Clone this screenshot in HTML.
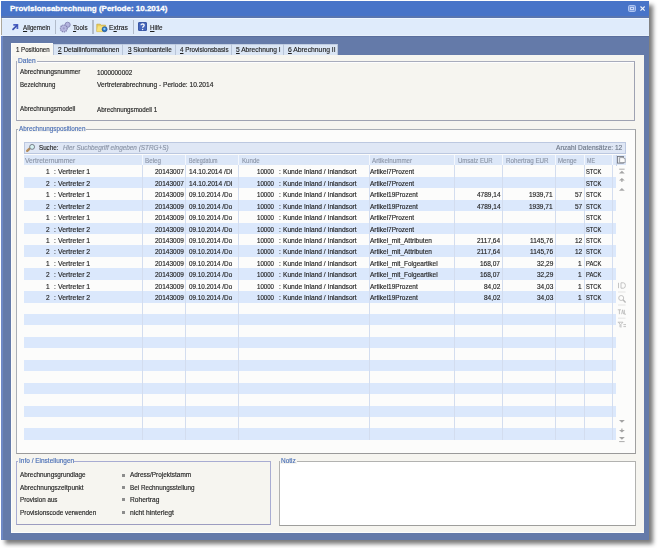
<!DOCTYPE html>
<html><head><meta charset="utf-8">
<style>
html,body{margin:0;padding:0;}
body{width:658px;height:548px;overflow:hidden;background:#ffffff;position:relative;font-family:"Liberation Sans",sans-serif;}
.a{position:absolute;box-sizing:border-box;}
.t{position:absolute;white-space:nowrap;line-height:1;transform-origin:0 0;font-family:"Liberation Sans",sans-serif;-webkit-text-stroke:0.15px currentColor;}
.t u{text-decoration:underline;text-decoration-thickness:0.75px;text-underline-offset:0.6px;}
svg{position:absolute;overflow:visible;}
</style></head><body>
<!-- shadow -->
<div class="a" style="left:4.6px;top:5px;width:648.6px;height:538.6px;background:rgba(40,40,40,0.62);filter:blur(2px);"></div>
<!-- window frame -->
<div class="a" style="left:1.2px;top:1.4px;width:648px;height:539px;background:#647aa9;"></div>
<div class="a" style="left:1.2px;top:36px;width:1.6px;height:504px;background:#6e88c4;"></div>
<!-- title -->
<div class="a" style="left:1.2px;top:1.4px;width:648px;height:14.3px;background:#4874c8;"></div>
<div class="a" style="left:1.2px;top:15.7px;width:648px;height:1.9px;background:#5a76b0;"></div>
<!-- toolbar -->
<div class="a" style="left:1.2px;top:17.5px;width:648px;height:18.5px;background:#dfebfb;border-top:1px solid #eef6fe;border-bottom:1px solid #e8f1fc;"></div>
<div class="a" style="left:1.2px;top:18px;width:1.2px;height:17px;background:#8a7a5a;opacity:0.6"></div>
<div class="a" style="left:54.6px;top:20px;width:1.2px;height:13.6px;background:#b2bccb;"></div>
<div class="a" style="left:92.4px;top:20px;width:1.2px;height:13.6px;background:#b2bccb;"></div>
<div class="a" style="left:132.6px;top:20px;width:1.2px;height:13.6px;background:#b2bccb;"></div>
<!-- window buttons -->
<div class="a" style="left:628.1px;top:4.9px;width:7.8px;height:7.5px;border:1.2px solid #aec4f0;border-radius:1.6px;background:#7f9fe0;"></div>
<div class="a" style="left:629.9px;top:7.1px;width:4.2px;height:3.4px;border:1px solid #c6d6f6;background:#6a88cc;"></div>
<svg style="left:640px;top:5.8px" width="5.2" height="5.2" viewBox="0 0 5.2 5.2"><path d="M0.5 0.5L4.7 4.7M4.7 0.5L0.5 4.7" stroke="#eef3fc" stroke-width="1.15"/></svg>
<div class="a" style="left:2.8px;top:36px;width:646.4px;height:1.2px;background:#5a6e9c;"></div>
<!-- tabs -->
<div class="a" style="left:53.4px;top:43.8px;width:284.6px;height:11.2px;background:#dae5f4;border-top:1px solid #c0cde2;"></div>
<div class="a" style="left:122.2px;top:44px;width:1px;height:11px;background:#b9c5d8;"></div>
<div class="a" style="left:174.9px;top:44px;width:1px;height:11px;background:#b9c5d8;"></div>
<div class="a" style="left:230.9px;top:44px;width:1px;height:11px;background:#b9c5d8;"></div>
<div class="a" style="left:282.7px;top:44px;width:1px;height:11px;background:#b9c5d8;"></div>
<div class="a" style="left:337.4px;top:44px;width:1px;height:11px;background:#b9c5d8;"></div>
<!-- content -->
<div class="a" style="left:10.9px;top:54.8px;width:633.3px;height:478.5px;background:#f6f5f0;border-left:1px solid #fdfdfb;border-bottom:1px solid #fdfdfb;"></div>
<div class="a" style="left:10.9px;top:42.8px;width:42.5px;height:13px;background:#f8f7f2;border-top:1px solid #fcfcfa;border-left:1px solid #fdfdfb;"></div>
<div class="a" style="left:53.2px;top:43.5px;width:0.9px;height:11.5px;background:#b4c0d4;"></div>
<!-- Daten group -->
<div class="a" style="left:16px;top:60.8px;width:619px;height:60.6px;border:1px solid #a8acbc;border-right-color:#9ea2b2;border-bottom-color:#9ea2b2;box-shadow:inset 1px 1px 0 #fdfdff;"></div>
<div class="a" style="left:17.3px;top:58px;width:19.8px;height:6px;background:#f6f5f0;"></div>
<!-- Positions group -->
<div class="a" style="left:15.8px;top:129.2px;width:620px;height:324.4px;border:1px solid #a9aeb6;border-bottom-color:#9a9a9a;border-right-color:#a0a0a0;background:#fcfcfb;"></div>
<div class="a" style="left:17.6px;top:126px;width:68.8px;height:6px;background:#f6f5f0;"></div>
<!-- search bar -->
<div class="a" style="left:23.8px;top:141.9px;width:602px;height:11.9px;background:#dfe7f5;border:1px solid #bcc8e0;"></div>
<!-- grid header -->
<div class="a" style="left:23.8px;top:155px;width:602px;height:10.3px;background:#dce7f8;"></div>
<div class="a" style="left:23.8px;top:176.74px;width:592.2px;height:11.44px;background:#dbe8fc;"></div>
<div class="a" style="left:23.8px;top:199.62px;width:592.2px;height:11.44px;background:#dbe8fc;"></div>
<div class="a" style="left:23.8px;top:222.50px;width:592.2px;height:11.44px;background:#dbe8fc;"></div>
<div class="a" style="left:23.8px;top:245.38px;width:592.2px;height:11.44px;background:#dbe8fc;"></div>
<div class="a" style="left:23.8px;top:268.26px;width:592.2px;height:11.44px;background:#dbe8fc;"></div>
<div class="a" style="left:23.8px;top:291.14px;width:592.2px;height:11.44px;background:#dbe8fc;"></div>
<div class="a" style="left:23.8px;top:314.02px;width:592.2px;height:11.44px;background:#dbe8fc;"></div>
<div class="a" style="left:23.8px;top:336.90px;width:592.2px;height:11.44px;background:#dbe8fc;"></div>
<div class="a" style="left:23.8px;top:359.78px;width:592.2px;height:11.44px;background:#dbe8fc;"></div>
<div class="a" style="left:23.8px;top:382.66px;width:592.2px;height:11.44px;background:#dbe8fc;"></div>
<div class="a" style="left:23.8px;top:405.54px;width:592.2px;height:11.44px;background:#dbe8fc;"></div>
<div class="a" style="left:23.8px;top:428.42px;width:592.2px;height:11.44px;background:#dbe8fc;"></div>
<div class="a" style="left:142.20px;top:165.3px;width:1px;height:274.3px;background:#d3ddef;"></div>
<div class="a" style="left:185.20px;top:165.3px;width:1px;height:274.3px;background:#d3ddef;"></div>
<div class="a" style="left:238.20px;top:165.3px;width:1px;height:274.3px;background:#d3ddef;"></div>
<div class="a" style="left:368.80px;top:165.3px;width:1px;height:274.3px;background:#d3ddef;"></div>
<div class="a" style="left:454.20px;top:165.3px;width:1px;height:274.3px;background:#d3ddef;"></div>
<div class="a" style="left:502.30px;top:165.3px;width:1px;height:274.3px;background:#d3ddef;"></div>
<div class="a" style="left:555.30px;top:165.3px;width:1px;height:274.3px;background:#d3ddef;"></div>
<div class="a" style="left:583.60px;top:165.3px;width:1px;height:274.3px;background:#d3ddef;"></div>
<div class="a" style="left:612.20px;top:165.3px;width:1px;height:274.3px;background:#d3ddef;"></div>
<div class="a" style="left:142.20px;top:155px;width:1px;height:10.3px;background:#f3f7fd;"></div>
<div class="a" style="left:185.20px;top:155px;width:1px;height:10.3px;background:#f3f7fd;"></div>
<div class="a" style="left:238.20px;top:155px;width:1px;height:10.3px;background:#f3f7fd;"></div>
<div class="a" style="left:368.80px;top:155px;width:1px;height:10.3px;background:#f3f7fd;"></div>
<div class="a" style="left:454.20px;top:155px;width:1px;height:10.3px;background:#f3f7fd;"></div>
<div class="a" style="left:502.30px;top:155px;width:1px;height:10.3px;background:#f3f7fd;"></div>
<div class="a" style="left:555.30px;top:155px;width:1px;height:10.3px;background:#f3f7fd;"></div>
<div class="a" style="left:583.60px;top:155px;width:1px;height:10.3px;background:#f3f7fd;"></div>
<div class="a" style="left:612.20px;top:155px;width:1px;height:10.3px;background:#f3f7fd;"></div>
<div class="a" style="left:616px;top:154.6px;width:1px;height:11px;background:#c8d4e8;"></div>
<!-- Info group -->
<div class="a" style="left:16px;top:461px;width:255px;height:63.6px;border:1px solid #a8acd2;border-bottom-color:#9c9cc0;"></div>
<div class="a" style="left:17.6px;top:458px;width:56.8px;height:6px;background:#f6f5f0;"></div>
<!-- Notiz -->
<div class="a" style="left:278.6px;top:461.2px;width:357px;height:64.4px;border:1px solid #b2b2b0;border-bottom-color:#9e9e9c;background:#ffffff;"></div>
<div class="a" style="left:280.4px;top:458px;width:16.2px;height:6px;background:#f6f5f0;"></div>
<!-- bullets -->
<div class="a" style="left:122px;top:474px;width:3px;height:3px;background:#8c8c8c;"></div>
<div class="a" style="left:122px;top:486px;width:3px;height:3px;background:#8c8c8c;"></div>
<div class="a" style="left:122px;top:498px;width:3px;height:3px;background:#8c8c8c;"></div>
<div class="a" style="left:122px;top:511px;width:3px;height:3px;background:#8c8c8c;"></div>

<svg style="left:11px;top:23px" width="9" height="9" viewBox="0 0 9 9"><path d="M2.3 1.9H6.4V5.9" fill="none" stroke="#4a60c4" stroke-width="1.7"/><path d="M6 2.3L2 6.3" stroke="#3d52b0" stroke-width="1.7" stroke-linecap="round"/></svg>
<svg style="left:58.5px;top:21px" width="12" height="12" viewBox="0 0 12 12">
 <circle cx="8.6" cy="3.8" r="2.6" fill="#b4b4de" stroke="#8484b4" stroke-width="0.9"/>
 <circle cx="4.8" cy="7.4" r="3.4" fill="#b8b8e0" stroke="#8282b0" stroke-width="1.2" stroke-dasharray="1.3 0.7"/>
 <circle cx="4.8" cy="7.4" r="1.1" fill="#9a9ac8"/>
</svg>
<svg style="left:96px;top:21.5px" width="12" height="11" viewBox="0 0 12 11">
 <path d="M0.8 2.2H4.2L5.2 3.2H9.6V9.6H0.8Z" fill="#e9cf5e" stroke="#c9a63a" stroke-width="0.7"/>
 <path d="M1.8 4.2H10.4L9.4 9.6H0.9Z" fill="#f6e27e"/>
 <circle cx="8.6" cy="7.2" r="2.5" fill="#2d78c8" stroke="#1d4f98" stroke-width="0.7"/>
 <circle cx="8.4" cy="6.9" r="1.1" fill="#8fd0f6"/>
</svg>
<div class="a" style="left:137.9px;top:21.9px;width:9.2px;height:9.2px;background:#4566bb;border:0.6px solid #3a58a6;border-radius:1px;"></div>
<svg style="left:137.9px;top:21.9px" width="9.2" height="9.2" viewBox="0 0 9.2 9.2"><path d="M3.1 3.2C3.1 1.6 6.2 1.6 6.2 3.3C6.2 4.5 4.6 4.5 4.6 5.8" fill="none" stroke="#f4f6fc" stroke-width="1.3"/><circle cx="4.6" cy="7.5" r="0.75" fill="#f4f6fc"/></svg>
<!-- search magnifier -->
<svg style="left:25px;top:143px" width="11" height="10" viewBox="0 0 11 10">
 <path d="M4.3 5.8L2.2 7.8" stroke="#b48c5c" stroke-width="2.4" stroke-linecap="round"/>
 <circle cx="7.1" cy="3.9" r="2.45" fill="#d6f2f2" stroke="#666a74" stroke-width="0.85"/>
</svg>
<!-- header icon -->
<svg style="left:617px;top:156.4px" width="9" height="8" viewBox="0 0 9 8"><rect x="0.5" y="0.5" width="6" height="6.6" fill="#e8ecf0" stroke="#6a6e78" stroke-width="0.8"/><path d="M2.6 1.6H6.2L7.2 2.6H8.2V6.6H2.6Z" fill="#fafafa" stroke="#80848c" stroke-width="0.7"/></svg>
<!-- scroll up icons -->
<svg style="left:618px;top:167.5px" width="8" height="25" viewBox="0 0 8 25">
 <path d="M1.2 1.2H6.6" stroke="#a2a2a2" stroke-width="0.9"/>
 <path d="M1 5.6L3.9 2.8L6.8 5.6Z" fill="#a4a4a4"/>
 <path d="M1 12.6L3.9 10L6.8 12.6Z" fill="#a4a4a4"/><path d="M3.9 12L3.9 14" stroke="#a4a4a4" stroke-width="1.2"/>
 <path d="M1 22.8L3.9 20L6.8 22.8Z" fill="#a8a8a8"/>
</svg>
<!-- scroll down icons -->
<svg style="left:618px;top:419px" width="8" height="25" viewBox="0 0 8 25">
 <path d="M1 1L3.9 3.8L6.8 1Z" fill="#a4a4a4"/>
 <path d="M1 11L3.9 13.6L6.8 11Z" fill="#a4a4a4"/><path d="M3.9 9.4L3.9 11.6" stroke="#a4a4a4" stroke-width="1.2"/>
 <path d="M1 18L3.9 20.8L6.8 18Z" fill="#a4a4a4"/>
 <path d="M1.2 22.6H6.6" stroke="#a2a2a2" stroke-width="0.9"/>
</svg>
<!-- side tool icons -->
<svg style="left:617px;top:281px" width="10" height="48" viewBox="0 0 10 48">
 <g fill="none" stroke="#b9b9b9" stroke-width="0.85">
  <path d="M1.5 1.8V7.2M4 1.8V7.2M4 1.8H6.5Q8.4 2 8.4 4.5Q8.4 7 6.5 7.2H4"/>
  <path d="M1 11H8.5" stroke="#dedede" stroke-width="0.8"/>
  <circle cx="4.2" cy="17" r="2.5"/><path d="M6 18.8L8.6 21.4" stroke-width="1.4"/>
  <path d="M1 24H8.5" stroke="#dedede" stroke-width="0.8"/>
  <path d="M0.8 28.8H4M2.4 28.8V33.2M4.6 33.2L5.6 28.8L6.6 33.2M7.4 28.8V33.2H9"/>
  <path d="M1 37.2H8.5" stroke="#dedede" stroke-width="0.8"/>
  <path d="M0.8 41.2H6L4 43.4V46.6M1.6 41.2L3 43.4V46.2M6.4 43.6H9M6.4 45.6H9"/>
 </g>
</svg>

<span class="t" style="left:10.00px;top:5.33px;font-size:8px;font-weight:bold;-webkit-text-stroke:0.3px currentColor;color:#ffffff;">Provisionsabrechnung (Periode: 10.2014)</span>
<span class="t" style="left:22.80px;top:23.57px;font-size:7px;color:#1e1e1e;transform:scaleX(0.885);"><u>A</u>llgemein</span>
<span class="t" style="left:72.60px;top:23.57px;font-size:7px;color:#1e1e1e;transform:scaleX(0.887);"><u>T</u>ools</span>
<span class="t" style="left:109.00px;top:23.57px;font-size:7px;color:#1e1e1e;transform:scaleX(0.953);">E<u>x</u>tras</span>
<span class="t" style="left:149.70px;top:23.57px;font-size:7px;color:#1e1e1e;transform:scaleX(0.885);"><u>H</u>ilfe</span>
<span class="t" style="left:15.80px;top:45.75px;font-size:7.5px;color:#1e1e1e;transform:scaleX(0.814);">1 Positionen</span>
<span class="t" style="left:58.30px;top:46.15px;font-size:7.5px;color:#1e1e1e;transform:scaleX(0.865);"><u>2</u> Detailinformationen</span>
<span class="t" style="left:128.00px;top:46.15px;font-size:7.5px;color:#1e1e1e;transform:scaleX(0.845);"><u>3</u> Skontoanteile</span>
<span class="t" style="left:179.80px;top:46.15px;font-size:7.5px;color:#1e1e1e;transform:scaleX(0.833);"><u>4</u> Provisionsbasis</span>
<span class="t" style="left:236.00px;top:46.15px;font-size:7.5px;color:#1e1e1e;transform:scaleX(0.885);"><u>5</u> Abrechnung I</span>
<span class="t" style="left:287.70px;top:46.15px;font-size:7.5px;color:#1e1e1e;transform:scaleX(0.906);"><u>6</u> Abrechnung II</span>
<span class="t" style="left:18.40px;top:56.77px;font-size:7px;color:#4a6fb5;transform:scaleX(0.942);">Daten</span>
<span class="t" style="left:19.80px;top:68.07px;font-size:7px;color:#1e1e1e;transform:scaleX(0.900);">Abrechnungsnummer</span>
<span class="t" style="left:97.30px;top:69.07px;font-size:7px;color:#1e1e1e;transform:scaleX(0.904);">1000000002</span>
<span class="t" style="left:19.80px;top:80.87px;font-size:7px;color:#1e1e1e;transform:scaleX(0.872);">Bezeichnung</span>
<span class="t" style="left:97.00px;top:81.27px;font-size:7px;color:#1e1e1e;transform:scaleX(0.943);">Vertreterabrechnung - Periode: 10.2014</span>
<span class="t" style="left:19.80px;top:105.37px;font-size:7px;color:#1e1e1e;transform:scaleX(0.895);">Abrechnungsmodell</span>
<span class="t" style="left:97.00px;top:105.57px;font-size:7px;color:#1e1e1e;transform:scaleX(0.889);">Abrechnungsmodell 1</span>
<span class="t" style="left:18.80px;top:125.47px;font-size:7px;color:#4a6fb5;transform:scaleX(0.908);">Abrechnungspositionen</span>
<span class="t" style="left:39.00px;top:144.27px;font-size:7px;color:#1e1e1e;transform:scaleX(0.890);">Suche:</span>
<span class="t" style="left:63.30px;top:144.27px;font-size:7px;font-style:italic;color:#8a94a6;transform:scaleX(0.913);">Hier Suchbegriff eingeben (STRG+S)</span>
<span class="t" style="left:555.70px;top:143.97px;font-size:7px;color:#6e7888;transform:scaleX(0.941);">Anzahl Datensätze: 12</span>
<span class="t" style="left:25.00px;top:157.47px;font-size:7px;color:#8c96a8;transform:scaleX(0.956);">Vertreternummer</span>
<span class="t" style="left:145.40px;top:157.47px;font-size:7px;color:#8c96a8;transform:scaleX(0.899);">Beleg</span>
<span class="t" style="left:188.90px;top:157.47px;font-size:7px;color:#8c96a8;transform:scaleX(0.760);">Belegdatum</span>
<span class="t" style="left:241.90px;top:157.47px;font-size:7px;color:#8c96a8;transform:scaleX(0.874);">Kunde</span>
<span class="t" style="left:371.90px;top:157.47px;font-size:7px;color:#8c96a8;transform:scaleX(0.889);">Artikelnummer</span>
<span class="t" style="left:457.60px;top:157.47px;font-size:7px;color:#8c96a8;transform:scaleX(0.855);">Umsatz EUR</span>
<span class="t" style="left:506.00px;top:157.47px;font-size:7px;color:#8c96a8;transform:scaleX(0.890);">Rohertrag EUR</span>
<span class="t" style="left:558.40px;top:157.47px;font-size:7px;color:#8c96a8;transform:scaleX(0.869);">Menge</span>
<span class="t" style="left:587.30px;top:157.47px;font-size:7px;color:#8c96a8;transform:scaleX(0.762);">ME</span>
<span class="t" style="left:45.68px;top:168.32px;font-size:7px;color:#1e1e1e;transform:scaleX(0.930);">1</span>
<span class="t" style="left:54.00px;top:168.32px;font-size:7px;color:#1e1e1e;transform:scaleX(0.930);">:</span>
<span class="t" style="left:57.50px;top:168.32px;font-size:7px;color:#1e1e1e;transform:scaleX(0.985);">Vertreter 1</span>
<span class="t" style="left:155.20px;top:168.32px;font-size:7px;color:#1e1e1e;transform:scaleX(0.931);">20143007</span>
<span class="t" style="left:188.50px;top:168.32px;font-size:7px;color:#1e1e1e;transform:scaleX(0.949);">14.10.2014 /Di</span>
<span class="t" style="left:257.40px;top:168.32px;font-size:7px;color:#1e1e1e;transform:scaleX(0.873);">10000</span>
<span class="t" style="left:278.80px;top:168.32px;font-size:7px;color:#1e1e1e;transform:scaleX(0.930);">:</span>
<span class="t" style="left:282.90px;top:168.32px;font-size:7px;color:#1e1e1e;transform:scaleX(0.946);">Kunde Inland / Inlandsort</span>
<span class="t" style="left:370.30px;top:168.32px;font-size:7px;color:#1e1e1e;transform:scaleX(0.930);">Artikel7Prozent</span>
<span class="t" style="left:586.00px;top:168.32px;font-size:7px;color:#1e1e1e;transform:scaleX(0.820);">STCK</span>
<span class="t" style="left:45.68px;top:179.76px;font-size:7px;color:#1e1e1e;transform:scaleX(0.930);">2</span>
<span class="t" style="left:54.00px;top:179.76px;font-size:7px;color:#1e1e1e;transform:scaleX(0.930);">:</span>
<span class="t" style="left:57.50px;top:179.76px;font-size:7px;color:#1e1e1e;transform:scaleX(0.985);">Vertreter 2</span>
<span class="t" style="left:155.20px;top:179.76px;font-size:7px;color:#1e1e1e;transform:scaleX(0.931);">20143007</span>
<span class="t" style="left:188.50px;top:179.76px;font-size:7px;color:#1e1e1e;transform:scaleX(0.949);">14.10.2014 /Di</span>
<span class="t" style="left:257.40px;top:179.76px;font-size:7px;color:#1e1e1e;transform:scaleX(0.873);">10000</span>
<span class="t" style="left:278.80px;top:179.76px;font-size:7px;color:#1e1e1e;transform:scaleX(0.930);">:</span>
<span class="t" style="left:282.90px;top:179.76px;font-size:7px;color:#1e1e1e;transform:scaleX(0.946);">Kunde Inland / Inlandsort</span>
<span class="t" style="left:370.30px;top:179.76px;font-size:7px;color:#1e1e1e;transform:scaleX(0.930);">Artikel7Prozent</span>
<span class="t" style="left:586.00px;top:179.76px;font-size:7px;color:#1e1e1e;transform:scaleX(0.820);">STCK</span>
<span class="t" style="left:45.68px;top:191.20px;font-size:7px;color:#1e1e1e;transform:scaleX(0.930);">1</span>
<span class="t" style="left:54.00px;top:191.20px;font-size:7px;color:#1e1e1e;transform:scaleX(0.930);">:</span>
<span class="t" style="left:57.50px;top:191.20px;font-size:7px;color:#1e1e1e;transform:scaleX(0.985);">Vertreter 1</span>
<span class="t" style="left:155.20px;top:191.20px;font-size:7px;color:#1e1e1e;transform:scaleX(0.931);">20143009</span>
<span class="t" style="left:188.50px;top:191.20px;font-size:7px;color:#1e1e1e;transform:scaleX(0.902);">09.10.2014 /Do</span>
<span class="t" style="left:257.40px;top:191.20px;font-size:7px;color:#1e1e1e;transform:scaleX(0.873);">10000</span>
<span class="t" style="left:278.80px;top:191.20px;font-size:7px;color:#1e1e1e;transform:scaleX(0.930);">:</span>
<span class="t" style="left:282.90px;top:191.20px;font-size:7px;color:#1e1e1e;transform:scaleX(0.946);">Kunde Inland / Inlandsort</span>
<span class="t" style="left:370.30px;top:191.20px;font-size:7px;color:#1e1e1e;transform:scaleX(0.930);">Artikel19Prozent</span>
<span class="t" style="left:476.87px;top:191.20px;font-size:7px;color:#1e1e1e;transform:scaleX(0.930);">4789,14</span>
<span class="t" style="left:529.47px;top:191.20px;font-size:7px;color:#1e1e1e;transform:scaleX(0.930);">1939,71</span>
<span class="t" style="left:574.86px;top:191.20px;font-size:7px;color:#1e1e1e;transform:scaleX(0.930);">57</span>
<span class="t" style="left:586.00px;top:191.20px;font-size:7px;color:#1e1e1e;transform:scaleX(0.820);">STCK</span>
<span class="t" style="left:45.68px;top:202.64px;font-size:7px;color:#1e1e1e;transform:scaleX(0.930);">2</span>
<span class="t" style="left:54.00px;top:202.64px;font-size:7px;color:#1e1e1e;transform:scaleX(0.930);">:</span>
<span class="t" style="left:57.50px;top:202.64px;font-size:7px;color:#1e1e1e;transform:scaleX(0.985);">Vertreter 2</span>
<span class="t" style="left:155.20px;top:202.64px;font-size:7px;color:#1e1e1e;transform:scaleX(0.931);">20143009</span>
<span class="t" style="left:188.50px;top:202.64px;font-size:7px;color:#1e1e1e;transform:scaleX(0.902);">09.10.2014 /Do</span>
<span class="t" style="left:257.40px;top:202.64px;font-size:7px;color:#1e1e1e;transform:scaleX(0.873);">10000</span>
<span class="t" style="left:278.80px;top:202.64px;font-size:7px;color:#1e1e1e;transform:scaleX(0.930);">:</span>
<span class="t" style="left:282.90px;top:202.64px;font-size:7px;color:#1e1e1e;transform:scaleX(0.946);">Kunde Inland / Inlandsort</span>
<span class="t" style="left:370.30px;top:202.64px;font-size:7px;color:#1e1e1e;transform:scaleX(0.930);">Artikel19Prozent</span>
<span class="t" style="left:476.87px;top:202.64px;font-size:7px;color:#1e1e1e;transform:scaleX(0.930);">4789,14</span>
<span class="t" style="left:529.47px;top:202.64px;font-size:7px;color:#1e1e1e;transform:scaleX(0.930);">1939,71</span>
<span class="t" style="left:574.86px;top:202.64px;font-size:7px;color:#1e1e1e;transform:scaleX(0.930);">57</span>
<span class="t" style="left:586.00px;top:202.64px;font-size:7px;color:#1e1e1e;transform:scaleX(0.820);">STCK</span>
<span class="t" style="left:45.68px;top:214.08px;font-size:7px;color:#1e1e1e;transform:scaleX(0.930);">1</span>
<span class="t" style="left:54.00px;top:214.08px;font-size:7px;color:#1e1e1e;transform:scaleX(0.930);">:</span>
<span class="t" style="left:57.50px;top:214.08px;font-size:7px;color:#1e1e1e;transform:scaleX(0.985);">Vertreter 1</span>
<span class="t" style="left:155.20px;top:214.08px;font-size:7px;color:#1e1e1e;transform:scaleX(0.931);">20143009</span>
<span class="t" style="left:188.50px;top:214.08px;font-size:7px;color:#1e1e1e;transform:scaleX(0.902);">09.10.2014 /Do</span>
<span class="t" style="left:257.40px;top:214.08px;font-size:7px;color:#1e1e1e;transform:scaleX(0.873);">10000</span>
<span class="t" style="left:278.80px;top:214.08px;font-size:7px;color:#1e1e1e;transform:scaleX(0.930);">:</span>
<span class="t" style="left:282.90px;top:214.08px;font-size:7px;color:#1e1e1e;transform:scaleX(0.946);">Kunde Inland / Inlandsort</span>
<span class="t" style="left:370.30px;top:214.08px;font-size:7px;color:#1e1e1e;transform:scaleX(0.930);">Artikel7Prozent</span>
<span class="t" style="left:586.00px;top:214.08px;font-size:7px;color:#1e1e1e;transform:scaleX(0.820);">STCK</span>
<span class="t" style="left:45.68px;top:225.52px;font-size:7px;color:#1e1e1e;transform:scaleX(0.930);">2</span>
<span class="t" style="left:54.00px;top:225.52px;font-size:7px;color:#1e1e1e;transform:scaleX(0.930);">:</span>
<span class="t" style="left:57.50px;top:225.52px;font-size:7px;color:#1e1e1e;transform:scaleX(0.985);">Vertreter 2</span>
<span class="t" style="left:155.20px;top:225.52px;font-size:7px;color:#1e1e1e;transform:scaleX(0.931);">20143009</span>
<span class="t" style="left:188.50px;top:225.52px;font-size:7px;color:#1e1e1e;transform:scaleX(0.902);">09.10.2014 /Do</span>
<span class="t" style="left:257.40px;top:225.52px;font-size:7px;color:#1e1e1e;transform:scaleX(0.873);">10000</span>
<span class="t" style="left:278.80px;top:225.52px;font-size:7px;color:#1e1e1e;transform:scaleX(0.930);">:</span>
<span class="t" style="left:282.90px;top:225.52px;font-size:7px;color:#1e1e1e;transform:scaleX(0.946);">Kunde Inland / Inlandsort</span>
<span class="t" style="left:370.30px;top:225.52px;font-size:7px;color:#1e1e1e;transform:scaleX(0.930);">Artikel7Prozent</span>
<span class="t" style="left:586.00px;top:225.52px;font-size:7px;color:#1e1e1e;transform:scaleX(0.820);">STCK</span>
<span class="t" style="left:45.68px;top:236.96px;font-size:7px;color:#1e1e1e;transform:scaleX(0.930);">1</span>
<span class="t" style="left:54.00px;top:236.96px;font-size:7px;color:#1e1e1e;transform:scaleX(0.930);">:</span>
<span class="t" style="left:57.50px;top:236.96px;font-size:7px;color:#1e1e1e;transform:scaleX(0.985);">Vertreter 1</span>
<span class="t" style="left:155.20px;top:236.96px;font-size:7px;color:#1e1e1e;transform:scaleX(0.931);">20143009</span>
<span class="t" style="left:188.50px;top:236.96px;font-size:7px;color:#1e1e1e;transform:scaleX(0.902);">09.10.2014 /Do</span>
<span class="t" style="left:257.40px;top:236.96px;font-size:7px;color:#1e1e1e;transform:scaleX(0.873);">10000</span>
<span class="t" style="left:278.80px;top:236.96px;font-size:7px;color:#1e1e1e;transform:scaleX(0.930);">:</span>
<span class="t" style="left:282.90px;top:236.96px;font-size:7px;color:#1e1e1e;transform:scaleX(0.946);">Kunde Inland / Inlandsort</span>
<span class="t" style="left:370.30px;top:236.96px;font-size:7px;color:#1e1e1e;transform:scaleX(0.930);">Artikel_mit_Attributen</span>
<span class="t" style="left:477.35px;top:236.96px;font-size:7px;color:#1e1e1e;transform:scaleX(0.930);">2117,64</span>
<span class="t" style="left:529.95px;top:236.96px;font-size:7px;color:#1e1e1e;transform:scaleX(0.930);">1145,76</span>
<span class="t" style="left:574.86px;top:236.96px;font-size:7px;color:#1e1e1e;transform:scaleX(0.930);">12</span>
<span class="t" style="left:586.00px;top:236.96px;font-size:7px;color:#1e1e1e;transform:scaleX(0.820);">STCK</span>
<span class="t" style="left:45.68px;top:248.40px;font-size:7px;color:#1e1e1e;transform:scaleX(0.930);">2</span>
<span class="t" style="left:54.00px;top:248.40px;font-size:7px;color:#1e1e1e;transform:scaleX(0.930);">:</span>
<span class="t" style="left:57.50px;top:248.40px;font-size:7px;color:#1e1e1e;transform:scaleX(0.985);">Vertreter 2</span>
<span class="t" style="left:155.20px;top:248.40px;font-size:7px;color:#1e1e1e;transform:scaleX(0.931);">20143009</span>
<span class="t" style="left:188.50px;top:248.40px;font-size:7px;color:#1e1e1e;transform:scaleX(0.902);">09.10.2014 /Do</span>
<span class="t" style="left:257.40px;top:248.40px;font-size:7px;color:#1e1e1e;transform:scaleX(0.873);">10000</span>
<span class="t" style="left:278.80px;top:248.40px;font-size:7px;color:#1e1e1e;transform:scaleX(0.930);">:</span>
<span class="t" style="left:282.90px;top:248.40px;font-size:7px;color:#1e1e1e;transform:scaleX(0.946);">Kunde Inland / Inlandsort</span>
<span class="t" style="left:370.30px;top:248.40px;font-size:7px;color:#1e1e1e;transform:scaleX(0.930);">Artikel_mit_Attributen</span>
<span class="t" style="left:477.35px;top:248.40px;font-size:7px;color:#1e1e1e;transform:scaleX(0.930);">2117,64</span>
<span class="t" style="left:529.95px;top:248.40px;font-size:7px;color:#1e1e1e;transform:scaleX(0.930);">1145,76</span>
<span class="t" style="left:574.86px;top:248.40px;font-size:7px;color:#1e1e1e;transform:scaleX(0.930);">12</span>
<span class="t" style="left:586.00px;top:248.40px;font-size:7px;color:#1e1e1e;transform:scaleX(0.820);">STCK</span>
<span class="t" style="left:45.68px;top:259.84px;font-size:7px;color:#1e1e1e;transform:scaleX(0.930);">1</span>
<span class="t" style="left:54.00px;top:259.84px;font-size:7px;color:#1e1e1e;transform:scaleX(0.930);">:</span>
<span class="t" style="left:57.50px;top:259.84px;font-size:7px;color:#1e1e1e;transform:scaleX(0.985);">Vertreter 1</span>
<span class="t" style="left:155.20px;top:259.84px;font-size:7px;color:#1e1e1e;transform:scaleX(0.931);">20143009</span>
<span class="t" style="left:188.50px;top:259.84px;font-size:7px;color:#1e1e1e;transform:scaleX(0.902);">09.10.2014 /Do</span>
<span class="t" style="left:257.40px;top:259.84px;font-size:7px;color:#1e1e1e;transform:scaleX(0.873);">10000</span>
<span class="t" style="left:278.80px;top:259.84px;font-size:7px;color:#1e1e1e;transform:scaleX(0.930);">:</span>
<span class="t" style="left:282.90px;top:259.84px;font-size:7px;color:#1e1e1e;transform:scaleX(0.946);">Kunde Inland / Inlandsort</span>
<span class="t" style="left:370.30px;top:259.84px;font-size:7px;color:#1e1e1e;transform:scaleX(0.930);">Artikel_mit_Folgeartikel</span>
<span class="t" style="left:480.49px;top:259.84px;font-size:7px;color:#1e1e1e;transform:scaleX(0.930);">168,07</span>
<span class="t" style="left:536.71px;top:259.84px;font-size:7px;color:#1e1e1e;transform:scaleX(0.930);">32,29</span>
<span class="t" style="left:578.48px;top:259.84px;font-size:7px;color:#1e1e1e;transform:scaleX(0.930);">1</span>
<span class="t" style="left:586.00px;top:259.84px;font-size:7px;color:#1e1e1e;transform:scaleX(0.825);">PACK</span>
<span class="t" style="left:45.68px;top:271.28px;font-size:7px;color:#1e1e1e;transform:scaleX(0.930);">2</span>
<span class="t" style="left:54.00px;top:271.28px;font-size:7px;color:#1e1e1e;transform:scaleX(0.930);">:</span>
<span class="t" style="left:57.50px;top:271.28px;font-size:7px;color:#1e1e1e;transform:scaleX(0.985);">Vertreter 2</span>
<span class="t" style="left:155.20px;top:271.28px;font-size:7px;color:#1e1e1e;transform:scaleX(0.931);">20143009</span>
<span class="t" style="left:188.50px;top:271.28px;font-size:7px;color:#1e1e1e;transform:scaleX(0.902);">09.10.2014 /Do</span>
<span class="t" style="left:257.40px;top:271.28px;font-size:7px;color:#1e1e1e;transform:scaleX(0.873);">10000</span>
<span class="t" style="left:278.80px;top:271.28px;font-size:7px;color:#1e1e1e;transform:scaleX(0.930);">:</span>
<span class="t" style="left:282.90px;top:271.28px;font-size:7px;color:#1e1e1e;transform:scaleX(0.946);">Kunde Inland / Inlandsort</span>
<span class="t" style="left:370.30px;top:271.28px;font-size:7px;color:#1e1e1e;transform:scaleX(0.930);">Artikel_mit_Folgeartikel</span>
<span class="t" style="left:480.49px;top:271.28px;font-size:7px;color:#1e1e1e;transform:scaleX(0.930);">168,07</span>
<span class="t" style="left:536.71px;top:271.28px;font-size:7px;color:#1e1e1e;transform:scaleX(0.930);">32,29</span>
<span class="t" style="left:578.48px;top:271.28px;font-size:7px;color:#1e1e1e;transform:scaleX(0.930);">1</span>
<span class="t" style="left:586.00px;top:271.28px;font-size:7px;color:#1e1e1e;transform:scaleX(0.825);">PACK</span>
<span class="t" style="left:45.68px;top:282.72px;font-size:7px;color:#1e1e1e;transform:scaleX(0.930);">1</span>
<span class="t" style="left:54.00px;top:282.72px;font-size:7px;color:#1e1e1e;transform:scaleX(0.930);">:</span>
<span class="t" style="left:57.50px;top:282.72px;font-size:7px;color:#1e1e1e;transform:scaleX(0.985);">Vertreter 1</span>
<span class="t" style="left:155.20px;top:282.72px;font-size:7px;color:#1e1e1e;transform:scaleX(0.931);">20143009</span>
<span class="t" style="left:188.50px;top:282.72px;font-size:7px;color:#1e1e1e;transform:scaleX(0.902);">09.10.2014 /Do</span>
<span class="t" style="left:257.40px;top:282.72px;font-size:7px;color:#1e1e1e;transform:scaleX(0.873);">10000</span>
<span class="t" style="left:278.80px;top:282.72px;font-size:7px;color:#1e1e1e;transform:scaleX(0.930);">:</span>
<span class="t" style="left:282.90px;top:282.72px;font-size:7px;color:#1e1e1e;transform:scaleX(0.946);">Kunde Inland / Inlandsort</span>
<span class="t" style="left:370.30px;top:282.72px;font-size:7px;color:#1e1e1e;transform:scaleX(0.930);">Artikel19Prozent</span>
<span class="t" style="left:484.11px;top:282.72px;font-size:7px;color:#1e1e1e;transform:scaleX(0.930);">84,02</span>
<span class="t" style="left:536.71px;top:282.72px;font-size:7px;color:#1e1e1e;transform:scaleX(0.930);">34,03</span>
<span class="t" style="left:578.48px;top:282.72px;font-size:7px;color:#1e1e1e;transform:scaleX(0.930);">1</span>
<span class="t" style="left:586.00px;top:282.72px;font-size:7px;color:#1e1e1e;transform:scaleX(0.820);">STCK</span>
<span class="t" style="left:45.68px;top:294.16px;font-size:7px;color:#1e1e1e;transform:scaleX(0.930);">2</span>
<span class="t" style="left:54.00px;top:294.16px;font-size:7px;color:#1e1e1e;transform:scaleX(0.930);">:</span>
<span class="t" style="left:57.50px;top:294.16px;font-size:7px;color:#1e1e1e;transform:scaleX(0.985);">Vertreter 2</span>
<span class="t" style="left:155.20px;top:294.16px;font-size:7px;color:#1e1e1e;transform:scaleX(0.931);">20143009</span>
<span class="t" style="left:188.50px;top:294.16px;font-size:7px;color:#1e1e1e;transform:scaleX(0.902);">09.10.2014 /Do</span>
<span class="t" style="left:257.40px;top:294.16px;font-size:7px;color:#1e1e1e;transform:scaleX(0.873);">10000</span>
<span class="t" style="left:278.80px;top:294.16px;font-size:7px;color:#1e1e1e;transform:scaleX(0.930);">:</span>
<span class="t" style="left:282.90px;top:294.16px;font-size:7px;color:#1e1e1e;transform:scaleX(0.946);">Kunde Inland / Inlandsort</span>
<span class="t" style="left:370.30px;top:294.16px;font-size:7px;color:#1e1e1e;transform:scaleX(0.930);">Artikel19Prozent</span>
<span class="t" style="left:484.11px;top:294.16px;font-size:7px;color:#1e1e1e;transform:scaleX(0.930);">84,02</span>
<span class="t" style="left:536.71px;top:294.16px;font-size:7px;color:#1e1e1e;transform:scaleX(0.930);">34,03</span>
<span class="t" style="left:578.48px;top:294.16px;font-size:7px;color:#1e1e1e;transform:scaleX(0.930);">1</span>
<span class="t" style="left:586.00px;top:294.16px;font-size:7px;color:#1e1e1e;transform:scaleX(0.820);">STCK</span>
<span class="t" style="left:18.50px;top:457.27px;font-size:7px;color:#4a6fb5;transform:scaleX(0.927);">Info / Einstellungen</span>
<span class="t" style="left:20.20px;top:471.17px;font-size:7px;color:#1e1e1e;transform:scaleX(0.905);">Abrechnungsgrundlage</span>
<span class="t" style="left:20.20px;top:483.57px;font-size:7px;color:#1e1e1e;transform:scaleX(0.917);">Abrechnungszeitpunkt</span>
<span class="t" style="left:20.20px;top:496.07px;font-size:7px;color:#1e1e1e;transform:scaleX(0.892);">Provision aus</span>
<span class="t" style="left:20.20px;top:508.77px;font-size:7px;color:#1e1e1e;transform:scaleX(0.911);">Provisionscode verwenden</span>
<span class="t" style="left:130.00px;top:471.17px;font-size:7px;color:#1e1e1e;transform:scaleX(0.919);">Adress/Projektstamm</span>
<span class="t" style="left:130.00px;top:483.57px;font-size:7px;color:#1e1e1e;transform:scaleX(0.902);">Bei Rechnungsstellung</span>
<span class="t" style="left:130.00px;top:496.07px;font-size:7px;color:#1e1e1e;transform:scaleX(0.945);">Rohertrag</span>
<span class="t" style="left:130.00px;top:508.77px;font-size:7px;color:#1e1e1e;transform:scaleX(0.962);">nicht hinterlegt</span>
<span class="t" style="left:281.00px;top:457.27px;font-size:7px;color:#4a6fb5;transform:scaleX(0.922);">Notiz</span>
</body></html>
